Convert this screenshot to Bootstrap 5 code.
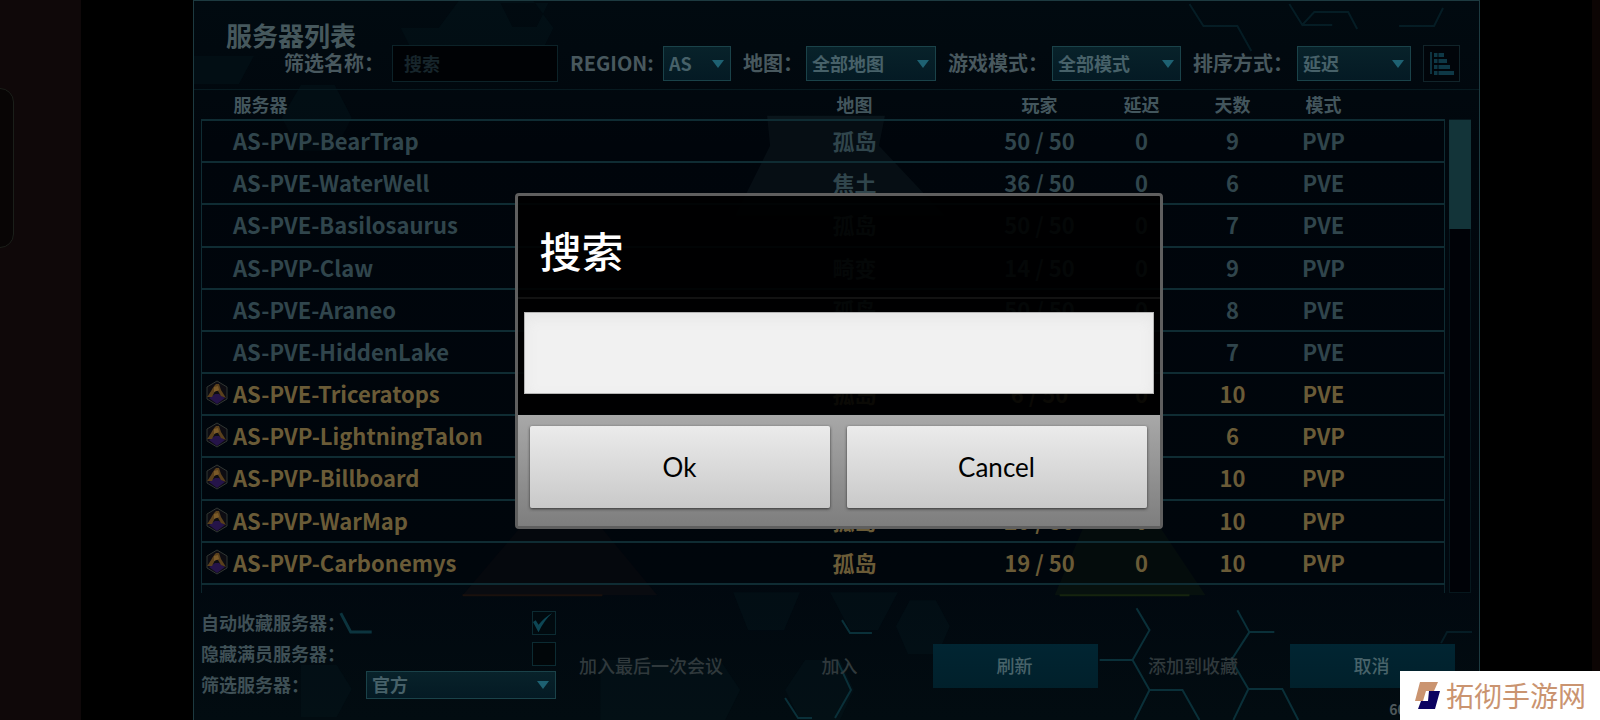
<!DOCTYPE html>
<html lang="zh-CN">
<head>
<meta charset="utf-8">
<meta name="viewport" content="width=device-width, initial-scale=1">
<title>服务器列表</title>
<link href="https://cdn.jsdelivr.net/npm/bootstrap@5.3.0/dist/css/bootstrap.min.css" rel="stylesheet">
<style>
  body { background: #000; color: #44555c; font-family: "Noto Sans CJK SC", sans-serif; font-weight: 700; }
  .stage { min-height: 100vh; overflow: hidden; }
  .edge-left { flex: 0 0 81px; background: #0f0809; }
  .edge-tab { top: 88px; left: -20px; width: 34px; height: 160px; border: 1px solid #1b1f1a; border-radius: 14px; background: #080505; }
  .edge-right { flex: 0 0 8px; background: #0c0504; }
  .game { padding: 0 112px; }
  .panel { border: 1px solid #1d3a40; background: linear-gradient(#010a10, #01070d 20%, #01080f 80%, #020c11); min-height: 720px; }
  .scene { inset: 0; width: 100%; height: 100%; }
  h1 { font-size: 26px; font-weight: 700; line-height: 26px; padding: 21px 0 0 32px; margin: 0; color: #46585d; }

  .filters { display: grid; grid-template-columns: 108fr 166fr 105fr 68fr 75fr 130fr 116fr 129fr 116fr 114fr 49fr; margin: -3px 19px 7px 90px; height: 37px; align-items: center; font-size: 20px; line-height: 34px; color: #48585e; }
  .filters label { padding: 0 0 2px 12px; white-space: nowrap; }
  .filters label:first-child { padding-left: 0; }
  .search-box { height: 37px; background: #000205; border: 1px solid #0c2228; color: #17252b; font-size: 18px; font-weight: 700; padding: 0 11px 2px; line-height: 32px; }
  .search-box::placeholder { color: #17252b; opacity: 1; }
  .pick { appearance: none; height: 35px; width: 100%; border: 1px solid #1a4249; border-radius: 0; color: #476169; font-size: 18px; font-weight: 700; line-height: 30px; padding: 0 20px 2px 5px;
    background: url("data:image/svg+xml,%3Csvg xmlns='http://www.w3.org/2000/svg' width='12' height='8'%3E%3Cpath d='M0 0h12L6 8z' fill='%231e6172'/%3E%3C/svg%3E") no-repeat right 6px center, linear-gradient(#08222a, #041a24); }
  .sort-btn { width: 37px; height: 37px; background: #01050a; border: 1px solid #11242a; padding: 0; }

  .list-zone { border-top: 1px solid #071a20; padding: 0 8px 0 7px; gap: 4px; }
  .servers { height: 495px; table-layout: fixed; width: 100%; font-size: 22px; line-height: 26px; color: #30454c; }
  .servers th { height: 30px; font-size: 18px; line-height: 26px; color: #43565d; padding: 0 2px 2px 0; text-align: center; }
  .servers td { padding: 0 2px 2px 0; text-align: center; vertical-align: middle; white-space: nowrap; }
  .servers th:first-child { text-align: left; padding-left: 32px; }
  .servers td:first-child { text-align: left; }
  .servers tbody tr { border: 1px solid #0f2c33; border-width: 2px 1px; background: rgba(0, 3, 9, .35); }
  .host { display: flex; align-items: center; }
  .host .slot { flex: 0 0 31px; display: flex; padding-left: 3px; }
  .servers .fav { color: #6a5b37; }
  .list-end { height: 8px; border: solid #0c252c; border-width: 0 1px; }
  .track { flex: 0 0 22px; margin-top: 29px; background: #000207; border: 1px solid #06171d; }
  .thumb { height: 109px; margin: 0 -1px; background: #133439; }

  .bottom { padding: 14px 24px 20px 7px; font-size: 18px; color: #3f5056; }
  .opts { flex: 0 0 355px; }
  .opt { height: 31px; line-height: 28px; }
  .opt label { padding-bottom: 2px; }
  .opt input { appearance: none; width: 24px; height: 24px; margin: 0; border: 1px solid #0c2b32; background: #010609; border-radius: 0; }
  .opt input:checked { background: #010a0f url("data:image/svg+xml,%3Csvg xmlns='http://www.w3.org/2000/svg' viewBox='0 0 24 24'%3E%3Cpath d='M0 11l3-2 3 5Q12 6 21 1 12 9 6 22z' fill='%230d4654'/%3E%3C/svg%3E"); }
  .opt .pick { width: 190px; height: 28px; line-height: 24px; }
  .acts { display: grid; grid-template-columns: 192fr 185fr 165fr 192fr 165fr; padding-top: 37px; }
  .act { height: 44px; padding: 0 2px 2px 0; border: 0; border-radius: 0; font-size: 18px; font-weight: 500; color: #30393c; background: none; }
  .act.solid { color: #48636a; background: linear-gradient(#012532, #01202b); }
  .fps { right: 44px; bottom: 1px; font-size: 14px; line-height: 20px; color: #4e585b; }

  .overlay { inset: 0 2px 0 79px; }
  .dialog-box { width: 648px; border: 3px solid #5f5f5f; border-radius: 4px; background: rgba(0, 0, 0, .9); font-weight: 400; }
  .dialog-box h2 { font-size: 42px; line-height: 60px; color: #fff; margin: 0; padding: 24px 22px 17px; border-bottom: 2px solid #121212; font-weight: 500; }
  .entry { margin: 13px 6px 21px; }
  .entry input { display: block; width: 100%; height: 82px; border: 1px solid #b5b5b5; border-radius: 0; background: #f1f1f1; box-shadow: inset 0 5px 14px #e6e6e6; padding: 0 16px; font-size: 30px; }
  .dialog-foot { display: grid; grid-template-columns: 1fr 1fr; gap: 17px; padding: 11px 13px 18px 12px; background: linear-gradient(#a8a8a8, #7e7e7e); }
  .dlg-btn { height: 82px; border: 0; border-radius: 2px; background: linear-gradient(#ebebeb, #c9c9c9); color: #000; font: 400 26px/40px Lato, sans-serif; box-shadow: 0 1px 3px #333; }

  .stamp { right: 0; bottom: 0; width: 200px; height: 50px; padding-left: 15px; gap: 6px; background: #fff; color: #ca9470; font-size: 28px; font-weight: 400; line-height: 46px; white-space: nowrap; }
  .stamp span { padding-bottom: 3px; }
</style>
</head>
<body>
<svg width="0" height="0" class="d-none" aria-hidden="true">
  <symbol id="crest" viewBox="0 0 24 26">
    <path d="M12 1l10 6v12l-10 6L2 19V7z" fill="#0d0c12" stroke="#303633"/>
    <path d="M4 18l6-4 4 0 6 4-8 6z" fill="#251449"/>
    <path d="M2 17C5 14 7 8 11 4h3l2 6 5 8-5-2-3-5-3 0-3 6z" fill="#5a401c"/>
    <path d="M9 7l4-1 1 4-5 2z" fill="#7b5a28"/>
  </symbol>
</svg>
<div class="stage d-flex position-relative">
  <aside class="edge-left position-relative"><div class="edge-tab position-absolute"></div></aside>

  <main class="game flex-grow-1 d-flex">
    <section class="panel flex-grow-1 d-flex flex-column position-relative">
      <svg class="scene position-absolute" viewBox="193 0 1287 720" preserveAspectRatio="none" aria-hidden="true">
        <g fill="#04141a" opacity=".5">
          <path d="M400 27h38l20-27h75l20 27-20 40H420zM500 2l12 24h24l12-24zM193 55h60l-15 28h-45zM300 84h34l17 33-17 33h-36l-17-33zM770 592h30l-16 38h-36l-15-38zM830 592l20 38h28l20-38zM600 660h120l20 30-15 30H600zM910 600h26l14 26-12 28h-30l-12-28zM785 690l20-30h35l14 30-14 30h-40zM300 665h36l15 24-15 28h-36z"/>
        </g>
        <path d="M767 115h118l-6 30 66 70H735l35-70z" fill="#0a151b"/>
        <path d="M560 480l-98 115h195l-58-70z" fill="#090b10"/>
        <path d="M1095 500l-40 95h151l-50-75z" fill="#07110e"/>
        <path d="M462 595h140" stroke="#1a110d" stroke-width="2"/>
        <path d="M1060 595h130" stroke="#16240e" stroke-width="2"/>
        <g fill="none" stroke="#0a3039" stroke-width="2">
          <path d="M1135 720l15-30h33l17 30M1150 690l-17-30 17-30-13-22M1100 660h33M1234 720l15-31h34l16 31M1249 689l-17-29 18-28h25M1250 632l-12-22M785 698l13 20h14M842 620l8 13h22M837 660l14 30-16 28"/>
          <path d="M340 613l10 19h21" stroke="#0c343e" stroke-width="3"/>
          <path d="M1190 3l14 22h34l14 25M1290 3l13 21 12-13h34l9 17M1303 24h30M1442 643l6-11h25M1400 25h35l9-18" opacity=".5"/>
        </g>
      </svg>

      <h1 class="position-relative">服务器列表</h1>
      <form class="filters position-relative" onsubmit="return false">
        <label for="name">筛选名称：</label><input id="name" class="search-box w-100" placeholder="搜索">
        <label for="region">REGION:</label><select id="region" class="pick"><option>AS</option></select>
        <label for="map">地图：</label><select id="map" class="pick"><option>全部地图</option></select>
        <label for="mode">游戏模式：</label><select id="mode" class="pick"><option>全部模式</option></select>
        <label for="sort">排序方式：</label><select id="sort" class="pick"><option>延迟</option></select>
        <div class="d-flex justify-content-end"><button class="sort-btn" type="button" aria-label="排序"><svg width="35" height="35" viewBox="0 0 35 35" class="d-block"><path d="M7 6v22" stroke="#0d3340" stroke-width="2"/><path d="M10 9h10M10 15h13M10 21h16M10 27h20" stroke="#0e3846" stroke-width="4"/><path d="M14 6v23" stroke="#01050a" stroke-width="1"/></svg></button></div>
      </form>

      <div class="list-zone d-flex position-relative">
        <div class="flex-grow-1">
          <table class="servers">
            <colgroup><col><col style="width:260px"><col style="width:110px"><col style="width:94px"><col style="width:88px"><col style="width:94px"><col style="width:73px"></colgroup>
            <thead><tr><th>服务器</th><th>地图</th><th>玩家</th><th>延迟</th><th>天数</th><th>模式</th><th></th></tr></thead>
            <tbody>
              <tr><td><div class="host"><span class="slot"></span>AS-PVP-BearTrap</div></td><td>孤岛</td><td>50 / 50</td><td>0</td><td>9</td><td>PVP</td><td></td></tr>
              <tr><td><div class="host"><span class="slot"></span>AS-PVE-WaterWell</div></td><td>焦土</td><td>36 / 50</td><td>0</td><td>6</td><td>PVE</td><td></td></tr>
              <tr><td><div class="host"><span class="slot"></span>AS-PVE-Basilosaurus</div></td><td>孤岛</td><td>50 / 50</td><td>0</td><td>7</td><td>PVE</td><td></td></tr>
              <tr><td><div class="host"><span class="slot"></span>AS-PVP-Claw</div></td><td>畸变</td><td>14 / 50</td><td>0</td><td>9</td><td>PVP</td><td></td></tr>
              <tr><td><div class="host"><span class="slot"></span>AS-PVE-Araneo</div></td><td>孤岛</td><td>50 / 50</td><td>0</td><td>8</td><td>PVE</td><td></td></tr>
              <tr><td><div class="host"><span class="slot"></span>AS-PVE-HiddenLake</div></td><td></td><td></td><td></td><td>7</td><td>PVE</td><td></td></tr>
              <tr class="fav"><td><div class="host"><span class="slot"><svg width="24" height="26"><use href="#crest"/></svg></span>AS-PVE-Triceratops</div></td><td>孤岛</td><td>6 / 50</td><td>0</td><td>10</td><td>PVE</td><td></td></tr>
              <tr class="fav"><td><div class="host"><span class="slot"><svg width="24" height="26"><use href="#crest"/></svg></span>AS-PVP-LightningTalon</div></td><td></td><td></td><td></td><td>6</td><td>PVP</td><td></td></tr>
              <tr class="fav"><td><div class="host"><span class="slot"><svg width="24" height="26"><use href="#crest"/></svg></span>AS-PVP-Billboard</div></td><td></td><td></td><td></td><td>10</td><td>PVP</td><td></td></tr>
              <tr class="fav"><td><div class="host"><span class="slot"><svg width="24" height="26"><use href="#crest"/></svg></span>AS-PVP-WarMap</div></td><td>孤岛</td><td>20 / 50</td><td>0</td><td>10</td><td>PVP</td><td></td></tr>
              <tr class="fav"><td><div class="host"><span class="slot"><svg width="24" height="26"><use href="#crest"/></svg></span>AS-PVP-Carbonemys</div></td><td>孤岛</td><td>19 / 50</td><td>0</td><td>10</td><td>PVP</td><td></td></tr>
            </tbody>
          </table>
          <div class="list-end"></div>
        </div>
        <div class="track"><div class="thumb"></div></div>
      </div>

      <div class="bottom d-flex position-relative">
        <div class="opts">
          <div class="opt d-flex justify-content-between align-items-center"><label for="autofav">自动收藏服务器：</label><input id="autofav" type="checkbox" checked></div>
          <div class="opt d-flex justify-content-between align-items-center"><label for="hidefull">隐藏满员服务器：</label><input id="hidefull" type="checkbox"></div>
          <div class="opt d-flex justify-content-between align-items-center"><label for="kind">筛选服务器：</label><select id="kind" class="pick"><option>官方</option></select></div>
        </div>
        <div class="acts flex-grow-1">
          <button class="act" type="button">加入最后一次会议</button>
          <button class="act" type="button">加入</button>
          <button class="act solid" type="button">刷新</button>
          <button class="act" type="button">添加到收藏</button>
          <button class="act solid" type="button">取消</button>
        </div>
      </div>
      <span class="fps position-absolute">60 FPS</span>
    </section>
  </main>
  <div class="edge-right"></div>

  <div class="overlay position-absolute d-flex align-items-center justify-content-center">
    <div class="dialog-box" role="dialog" aria-labelledby="dlg-title">
      <h2 id="dlg-title">搜索</h2>
      <div class="entry"><input type="text" aria-labelledby="dlg-title"></div>
      <div class="dialog-foot">
        <button class="dlg-btn" type="button">Ok</button>
        <button class="dlg-btn" type="button">Cancel</button>
      </div>
    </div>
  </div>

  <div class="stamp position-absolute d-flex align-items-center">
    <svg width="25" height="28" viewBox="0 0 25 28" aria-hidden="true"><path d="M5 0h18l-4 9h-8l-3 10H0z" fill="#ca9470"/><path d="M14 9h11l-5 18H3l3-8h7z" fill="#0c0260"/></svg>
    <span>拓彻手游网</span>
  </div>
</div>
<script src="https://cdn.jsdelivr.net/npm/bootstrap@5.3.0/dist/js/bootstrap.bundle.min.js"></script>
</body>
</html>
